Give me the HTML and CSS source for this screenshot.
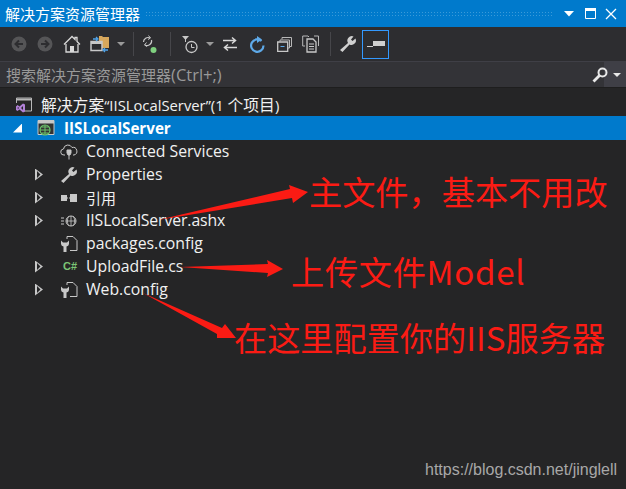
FILE: index.html
```html
<!DOCTYPE html>
<html lang="zh">
<head>
<meta charset="utf-8">
<title>解决方案资源管理器</title>
<link rel="stylesheet" href="styles.css">
</head>
<body>
<div class="panel">
  <header class="titlebar">
    <span class="title">解决方案资源管理器</span>
    <span class="grip"></span>
    <div class="winbtns">
      <svg class="w1" width="10" height="6" viewBox="0 0 10 6"><path d="M0 0h10L5 5.500z" fill="#fff"/></svg>
      <svg class="w2" width="11" height="11" viewBox="0 0 11 11"><path d="M.5.500h10v10H.5z" fill="none" stroke="#fff"/><path d="M0 0h11v3H0z" fill="#fff"/></svg>
      <svg class="w3" width="12" height="12" viewBox="0 0 12 12"><path d="M1 1l10 10M11 1L1 11" stroke="#fff" stroke-width="1.300" fill="none"/></svg>
    </div>
  </header>

  <div class="toolbar">
    <svg class="t" width="16" height="16" viewBox="0 0 16 16"><circle cx="8" cy="8" r="7.500" fill="#555557"/><path d="M12 8H5M8 4.500L4.500 8 8 11.500" stroke="#2d2d30" stroke-width="2" fill="none"/></svg>
    <svg class="t t2" width="16" height="16" viewBox="0 0 16 16"><circle cx="8" cy="8" r="7.500" fill="#555557"/><path d="M4 8h7M8 4.500L11.500 8 8 11.500" stroke="#2d2d30" stroke-width="2" fill="none"/></svg>
    <svg class="t t3" width="18" height="18" viewBox="0 0 18 18"><path d="M1 9.500L9 1.500l3 3V2.500h2v4l3 3" fill="none" stroke="#d8d8d8" stroke-width="1.300"/><path d="M3 9v8h12V9" fill="none" stroke="#d8d8d8" stroke-width="1.300"/><path d="M7 11h4v6H7z" fill="#d8d8d8"/></svg>
    <svg class="t t4" width="20" height="18" viewBox="0 0 20 18"><path d="M9 1h3l1 1h6v11H9z" fill="#d8a85c"/><path d="M1 6.500h11v9H1z" fill="#2d2d30" stroke="#c8c8c8" stroke-width="1.500"/><path d="M1 6.500h11v2.500H1z" fill="#c8c8c8"/><path d="M3 4h4M6 2l2 2-2 2" stroke="#4fa3e8" fill="none" stroke-width="1.300"/><path d="M18 15h-4M15 13l-2 2 2 2" stroke="#4fa3e8" fill="none" stroke-width="1.300"/></svg>
    <span class="caret c1"></span>
    <span class="sep s1"></span>
    <svg class="t t5" width="16" height="19" viewBox="0 0 16 19"><path d="M1.500 7a4.500 4.500 0 0 1 6.500-4M9.500 5a4.500 4.500 0 0 1-6.500 5" fill="none" stroke="#c8c8c8" stroke-width="1.200"/><path d="M6.500 .5l2 2.500-2.500 1.500M4.500 7.500l-2 2.500 2.500 1.500" fill="none" stroke="#c8c8c8" stroke-width="1"/><circle cx="11.500" cy="15" r="3" fill="#7fd07f"/></svg>
    <span class="sep s2"></span>
    <svg class="t t6" width="17" height="19" viewBox="0 0 17 19"><path d="M0 1h7L3.500 5z" fill="#c8c8c8"/><path d="M3.500 4v3" stroke="#c8c8c8"/><circle cx="9.500" cy="12" r="5.500" fill="none" stroke="#c8c8c8" stroke-width="1.300"/><path d="M9.500 9v3.500h3" fill="none" stroke="#c8c8c8"/></svg>
    <span class="caret c2"></span>
    <svg class="t t7" width="16" height="16" viewBox="0 0 16 16"><path d="M1 4.500h12M10 1.500l3.500 3-3.500 3M15 11.500H3M6 8.500l-3.500 3 3.500 3" fill="none" stroke="#d8d8d8" stroke-width="1.500"/></svg>
    <svg class="t t8" width="16" height="17" viewBox="0 0 16 17"><path d="M12.500 5A6.200 6.200 0 1 0 14.500 9.500" fill="none" stroke="#5ea9e8" stroke-width="2.200"/><path d="M8 0v7l5-3.500z" fill="#5ea9e8"/></svg>
    <svg class="t t9" width="15" height="15" viewBox="0 0 15 15"><path d="M5 2.500V.500h9.500v9H12M3 4.500V3h9.500v8H11" fill="none" stroke="#b8b8b8"/><path d="M.7 5h10v9.300H.7z" fill="#2d2d30" stroke="#c8c8c8" stroke-width="1.300"/><path d="M3.500 9.500h4" stroke="#5ea9e8"/></svg>
    <svg class="t t10" width="18" height="18" viewBox="0 0 18 18"><path d="M3 11H.700V1H6l1 1M12 1h4.500v10" fill="none" stroke="#b8b8b8"/><path d="M5 4h6l3 3v10H5z" fill="#2d2d30" stroke="#c8c8c8" stroke-width="1.300"/><path d="M7 9h5M7 11.500h5M7 14h5" stroke="#c8c8c8"/></svg>
    <span class="sep s3"></span>
    <svg class="t t11" width="18" height="18" viewBox="0 0 18 18"><path d="M1 15l8-7a4.500 4.500 0 0 1 5.500-6.500L12 4.500l1.500 1.500 3-2.500A4.500 4.500 0 0 1 10.500 9.500l-7 7.500z" fill="#d0d0d0"/></svg>
    <div class="pin"><svg width="18" height="7" viewBox="0 0 18 7"><path d="M6 0h12v5H6zM0 5h6v1H0z" fill="#d0d0d0"/></svg></div>
  </div>

  <div class="search">
    <span class="placeholder">搜索解决方案资源管理器<span class="lat-s">(Ctrl+;)</span></span>
    <div class="searchbtn">
      <svg width="16" height="16" viewBox="0 0 16 16"><circle cx="10.500" cy="5.500" r="4" fill="none" stroke="#e8e8e8" stroke-width="2"/><path d="M7.500 8.500L1.500 14.500" stroke="#e8e8e8" stroke-width="2.800"/></svg>
      <span class="caret light"></span>
    </div>
  </div>

  <ul class="tree">
    <li class="row top">
      <span class="icon">
        <svg width="17" height="16" viewBox="0 0 17 16"><path d="M1.500 6V1h15v13H9" fill="none" stroke="#b8b8b8"/><path d="M1.500 1.500h15v2h-15z" fill="#b8b8b8"/><path d="M1 9.500l1.500-1.500 2 1.500L8 6.500l2 1v7l-2 1-3.500-3L2.500 14 1 13z" fill="#b180d7"/><path d="M3 10l-.5 1 .5 1 1-1zM8 9l-2 2 2 2z" fill="#252526"/></svg>
      </span>
      <span class="cjk sol">解决方案<span class="lat">“IISLocalServer”(1 </span>个项目<span class="lat">)</span></span>
    </li>
    <li class="row sel">
      <span class="expand open"></span>
      <span class="icon">
        <svg width="18" height="18" viewBox="0 0 18 18"><path d="M1 1.500h16v14H1z" fill="#333" stroke="#c8c8c8"/><path d="M1 1.500h16v3H1z" fill="#c8c8c8"/><circle cx="8" cy="11" r="5" fill="#333" stroke="#6cc26c" stroke-width="1.200"/><path d="M3 11h10M8 6v10M5 8h6M5 14h6" stroke="#6cc26c"/></svg>
      </span>
      <b>IISLocalServer</b>
    </li>
    <li class="row lv2">
      <span class="icon">
        <svg width="18" height="16" viewBox="0 0 18 16"><path d="M5 11H4a3 3 0 0 1-.5-6A4.500 4.500 0 0 1 12 3.500 3.700 3.700 0 0 1 14 11h-1" fill="none" stroke="#c8c8c8"/><path d="M7 6h4v3l-1 2H8L7 9zM9 11v4.500" fill="#c8c8c8" stroke="#c8c8c8"/></svg>
      </span>
      <span>Connected Services</span>
    </li>
    <li class="row lv2 has">
      <span class="expand"></span>
      <span class="icon">
        <svg width="18" height="18" viewBox="0 0 18 18"><path d="M1 15l8-7a4.500 4.500 0 0 1 5.500-6.500L12 4.500l1.500 1.500 3-2.500A4.500 4.500 0 0 1 10.500 9.500l-7 7.500z" fill="#c8c8c8"/></svg>
      </span>
      <span>Properties</span>
    </li>
    <li class="row lv2 has">
      <span class="expand"></span>
      <span class="icon">
        <svg width="18" height="10" viewBox="0 0 18 10"><path d="M1 2h6v6H1z" fill="#c8c8c8"/><path d="M7 5h3" stroke="#c8c8c8" stroke-dasharray="1 1"/><path d="M10 1h7v8h-7z" fill="#c8c8c8"/></svg>
      </span>
      <span class="cjk">引用</span>
    </li>
    <li class="row lv2 has">
      <span class="expand"></span>
      <span class="icon">
        <svg width="18" height="12" viewBox="0 0 18 12"><path d="M1 3h3M1 6h3M1 9h3" stroke="#c8c8c8"/><circle cx="11" cy="6" r="5" fill="none" stroke="#c8c8c8"/><path d="M6 6h10M11 1v10M8.500 1.500c-1.500 3-1.500 6 0 9M13.500 1.500c1.500 3 1.500 6 0 9" fill="none" stroke="#c8c8c8" stroke-width=".8"/></svg>
      </span>
      <span class="ashx">IISLocalServer.ashx</span>
    </li>
    <li class="row lv2">
      <span class="icon">
        <svg width="18" height="18" viewBox="0 0 18 18"><path d="M7 4V1.500h6l4 4v10H10" fill="none" stroke="#c8c8c8"/><path d="M1 5.500V9a3 3 0 0 0 2.500 2.500V17h3v-5.500A3 3 0 0 0 9 9V5.500L7 7.500H3z" fill="#c8c8c8"/></svg>
      </span>
      <span>packages.config</span>
    </li>
    <li class="row lv2 has">
      <span class="expand"></span>
      <span class="icon"><span class="csharp">C#</span></span>
      <span>UploadFile.cs</span>
    </li>
    <li class="row lv2 has">
      <span class="expand"></span>
      <span class="icon">
        <svg width="18" height="18" viewBox="0 0 18 18"><path d="M7 4V1.500h6l4 4v10H10" fill="none" stroke="#c8c8c8"/><path d="M1 5.500V9a3 3 0 0 0 2.500 2.500V17h3v-5.500A3 3 0 0 0 9 9V5.500L7 7.500H3z" fill="#c8c8c8"/></svg>
      </span>
      <span>Web.config</span>
    </li>
  </ul>

  <svg class="arrows" width="626" height="489" viewBox="0 0 626 489">
    <path d="M158 220L290 189 289 185 308 192 293 203 292 198z" fill="#fb1b14"/>
    <path d="M180 267L268 264 267 260 283 269 267 277 268 273z" fill="#fb1b14"/>
    <path d="M143 293L222 328 225 324 236 338 217 338 217 334z" fill="#fb1b14"/>
  </svg>
  <span class="note n1">主文件，基本不用改</span>
  <span class="note n2">上传文件Model</span>
  <span class="note n3">在这里配置你的IIS服务器</span>
  <span class="mark">https://blog.csdn.net/jinglell</span>
</div>
</body>
</html>
```

FILE: styles.css
```css
* { box-sizing: border-box; }
html, body { margin: 0; padding: 0; }
body { width: 626px; height: 489px; overflow: hidden; background: #252526; }
.panel {
  position: relative;
  width: 626px;
  height: 489px;
  background: #252526;
  color: #f1f1f1;
  font: 15.800px/23px "Open Sans", "Noto Sans CJK SC", sans-serif;
  overflow: hidden;
}
.titlebar {
  display: flex;
  align-items: center;
  height: 27px;
  padding: 0 9px 0 5px;
  background: #007acc;
  color: #fff;
}
.title { font-family: "Noto Sans CJK SC", sans-serif; font-size: 15px; }
.grip {
  flex: 1;
  height: 6px;
  margin: 0 10px 0 5px;
  background-image: radial-gradient(#3a9ad9 40%, transparent 45%);
  background-size: 3px 3px;
}
.winbtns { display: flex; align-items: center; }
.w2 { margin-left: 11px; }
.w3 { margin-left: 9px; }
.toolbar {
  display: flex;
  align-items: center;
  height: 34px;
  padding-left: 11px;
  background: #2d2d30;
}
.t { display: block; flex: none; }
.t2 { margin-left: 10px; }
.t3 { margin-left: 10px; }
.t4 { margin-left: 9px; }
.t5 { margin-left: 8px; }
.t6 { margin-left: 11px; }
.t7 { margin-left: 8px; }
.t8 { margin-left: 11px; }
.t9 { margin-left: 12px; }
.t10 { margin-left: 10px; }
.t11 { margin-left: 8px; }
.caret {
  flex: none;
  width: 0;
  height: 0;
  border-left: 4px solid transparent;
  border-right: 4px solid transparent;
  border-top: 4px solid #9a9a9a;
}
.c1 { margin-left: 7px; }
.c2 { margin-left: 7px; }
.caret.light { border-top-color: #e8e8e8; margin-left: 5px; }
.sep { flex: none; width: 1px; height: 24px; background: #46464a; }
.s1 { margin-left: 8px; }
.s2 { margin-left: 12px; }
.s3 { margin-left: 10px; }
.pin {
  display: flex;
  align-items: center;
  justify-content: center;
  width: 27px;
  height: 29px;
  margin-left: 5px;
  border: 1px solid #3399ff;
}
.search {
  display: flex;
  align-items: center;
  justify-content: space-between;
  height: 27px;
  padding-left: 6px;
  background: #333337;
  border-top: 1px solid #3f3f46;
  border-bottom: 1px solid #1e1e1e;
}
.placeholder { color: #999; font-family: "Noto Sans CJK SC", sans-serif; font-size: 15px; }
.lat-s { font-family: "Open Sans", sans-serif; font-size: 16.500px; }
.searchbtn {
  display: flex;
  align-items: center;
  height: 100%;
  width: 37px;
  justify-content: flex-end;
  padding-right: 5px;
  background: linear-gradient(90deg, transparent 15px, #3f3f46 15px);
}
.tree { list-style: none; margin: 5px 0 0; padding: 0; }
.row {
  display: flex;
  align-items: center;
  height: 23px;
  padding-left: 15px;
  white-space: nowrap;
}
.row.sel { height: 24px; padding-left: 13px; background: #007acc; color: #fff; }
.row.sel b { font-weight: 700; font-size: 15.200px; }
.cjk { font-family: "Noto Sans CJK SC", sans-serif; font-size: 15px; }
.cjk.sol { font-size: 15.800px; }
.lat { font-family: "Open Sans", sans-serif; font-size: 14.800px; white-space: pre; }
.ashx { letter-spacing: -.1px; }
.icon { display: flex; flex: none; align-items: center; justify-content: flex-start; width: 26px; height: 18px; }
.row.sel .icon { width: 27px; }
.row.lv2 { padding-left: 60px; }
.row.lv2.has { padding-left: 35px; }
.expand {
  flex: none;
  width: 8px;
  height: 12px;
  margin-right: 17px;
  clip-path: polygon(0 0, 100% 50%, 0 100%);
  background-color: #c8c8c8;
  position: relative;
}
.expand::after {
  content: "";
  position: absolute;
  inset: 2px auto 2px 1.500px;
  width: 4px;
  background: #252526;
  clip-path: polygon(0 0, 100% 50%, 0 100%);
}
.expand.open {
  width: 9px;
  height: 9px;
  margin-right: 15px;
  background: #fff;
  clip-path: polygon(100% 0, 100% 100%, 0 100%);
}
.expand.open::after { display: none; }
.csharp { margin-left: 3px; color: #7cc576; font: 700 11px/1 "Liberation Sans", sans-serif; }
.arrows { position: absolute; left: 0; top: 0; pointer-events: none; }
.note {
  position: absolute;
  color: #fb1b14;
  font-family: "Noto Sans CJK SC", sans-serif;
  font-size: 33.200px;
  line-height: 40px;
  white-space: nowrap;
}
.n1 { left: 309px; top: 171px; }
.n2 { left: 291px; top: 251px; letter-spacing: .7px; }
.n3 { left: 234px; top: 317px; }
.mark {
  position: absolute;
  left: 425px;
  top: 459px;
  color: #a8a8a8;
  font: 16px/22px "Liberation Sans", sans-serif;
}
```
